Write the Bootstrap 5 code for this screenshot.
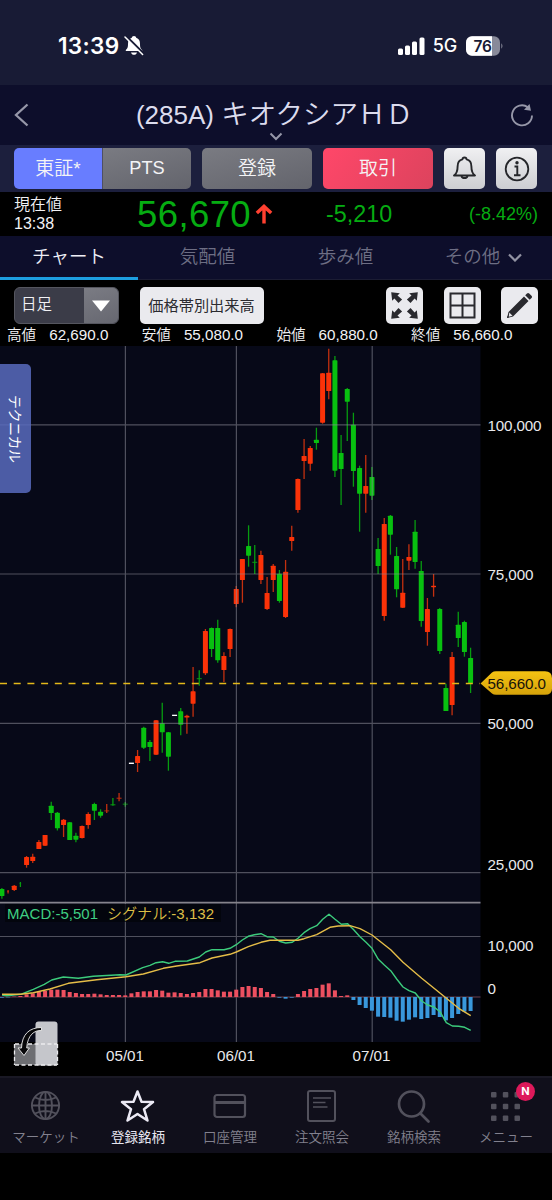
<!DOCTYPE html>
<html lang="ja">
<head>
<meta charset="utf-8">
<meta name="viewport" content="width=device-width, initial-scale=1">
<title>キオクシアHD チャート</title>
<link href="https://cdn.jsdelivr.net/npm/bootstrap@5.3.0/dist/css/bootstrap.min.css" rel="stylesheet">
<style>
body{background:#000;color:#f2f2f5;width:552px;height:1200px;overflow:hidden;font-family:"Liberation Sans","Noto Sans CJK JP",sans-serif;line-height:1.2}
svg{display:block;flex:none}
.btn{--bs-btn-padding-x:0;--bs-btn-padding-y:0;--bs-btn-border-width:0;--bs-btn-border-radius:5px;--bs-btn-font-size:19px;--bs-btn-color:#f4f4f6;--bs-btn-line-height:1;font-weight:350;height:41px;display:flex;align-items:center;justify-content:center;flex:none}
.status{height:85px;background:#181b35;padding:6px 49px 0 58px;font-family:Inter,sans-serif;color:#fff}
.clock{font-size:22.6px;font-weight:600;letter-spacing:.3px}
.net{font-size:18px;font-weight:500;letter-spacing:-.2px}
.titlebar{height:60px;background:#0d0e2b;padding:0 18px 0 14px}
.titlebar h1{font-size:26px;font-weight:350;color:#dcdcee;white-space:nowrap;line-height:30px;padding-left:9px}
.titlebar h1 span{font-size:27.5px}
.title-arrow{left:269px;top:47px}
.actions{height:47px;background:#1c1f3d;padding:3px 14px;}
.b-on{background:#687dff;width:88px}
.b-grey{background:linear-gradient(165deg,#7a7b82,#63646c)}
.b-red{background:linear-gradient(125deg,#ff4769,#dc435d);width:110px}
.b-light{background:linear-gradient(#f0f0f2,#cdced2);width:41px}
.quote{height:44px;background:#000;padding:0 14px}
.quote small{font-size:16px;line-height:19px;width:123px;font-weight:350}
.up{color:#06ac12}
.last{font-size:36.5px;line-height:46px;letter-spacing:.4px}
.tabs{height:44px;background:#0d0e2b;font-size:18.5px;font-weight:350}
.tabs .nav-link{width:138px;padding:0 0 0 1px;height:44px;color:#6d6e84;display:flex;align-items:center;justify-content:center;border-bottom:1px solid #1b1c33}
.tabs .nav-link.active{color:#eeeef6;border-bottom:3px solid #1d9ee0;padding:2px 0 0}
.tools{height:46px;padding:7px 14px 0}
.tools .btn{height:37px;color:#2b2b30;--bs-btn-font-size:15.2px;font-weight:400}
.period{width:105px;height:37px;border:1px solid #55565f;border-radius:6px;background:#3b3c48;font-size:15.500px;overflow:hidden;font-weight:350;padding-left:6px}
.period i{width:34px;height:37px;background:linear-gradient(160deg,#7b7c84,#666770)}
.tl{background:#eaeaee}
.ohlc{height:20px;font-size:14.6px;line-height:18px;font-weight:350;padding-left:7px}
.ohlc div{width:134.7px;white-space:nowrap}
.ohlc b{font-weight:400;font-size:15.2px;margin-left:13px}
.technical{left:0;top:18px;width:30.5px;height:129px;background:rgba(88,107,190,.85);border-radius:0 5px 5px 0;font-size:14px;letter-spacing:-.5px;writing-mode:vertical-rl;text-orientation:sideways;display:flex;align-items:center;justify-content:center;color:#fff;font-family:"Noto Sans CJK JP",sans-serif}
.bottom{height:77px;background:#100f1b;border-top:2px solid #191824}
.bottom a{width:92px;color:#82818e;text-decoration:none;font-size:13.5px;font-weight:350;padding-top:9px;line-height:18px}
.bottom a.active{color:#e5e4ef;font-weight:400}
.bottom svg{margin-bottom:4px;margin-left:-1px}
.n-badge{left:56px;top:4px;width:19px;height:19px;background:#dd195a;font:700 11px/19px Inter,sans-serif;padding:0}
</style>
</head>
<body>
<header>
<div class="status d-flex align-items-center justify-content-between">
 <div class="d-flex align-items-center"><span class="clock">13:39</span>
  <svg style="margin-left:5px" width="20" height="21" viewBox="0 0 20 21"><path d="M10 1c1.300 0 2 .8 2.200 1.800C15 3.700 16 6 16 9c0 4 .8 4.500 2.200 6v1H1.800v-1C3.200 13.500 4 13 4 9c0-3 1-5.300 3.800-6.200C8 1.800 8.700 1 10 1zM7 17.500h6c-.5 1.600-1.500 2.300-3 2.300s-2.500-.7-3-2.300z" fill="#fff"/><path d="M2.200 1.300l17.500 17.500" stroke="#181b35" stroke-width="2.600"/><path d="M1 2l17.600 17.500" stroke="#fff" stroke-width="1.500" stroke-linecap="round"/></svg></div>
 <div class="d-flex align-items-center">
  <svg width="28" height="20" viewBox="0 0 28 20" fill="#fff"><rect x="0" y="12.500" width="5" height="6.500" rx="1.500"/><rect x="7" y="9.500" width="5" height="9.500" rx="1.500"/><rect x="14" y="5.500" width="5" height="13.500" rx="1.500"/><rect x="21.500" y="1.500" width="5" height="17.500" rx="1.500"/></svg>
  <span class="net" style="margin:0 9px 0 7px">5G</span>
  <svg width="37" height="20" viewBox="0 0 37 20"><defs><clipPath id="cell"><rect width="34" height="19.500" y=".2" rx="6"/></clipPath></defs><g clip-path="url(#cell)"><rect width="34" height="20" fill="#888a99"/><rect width="26" height="20" fill="#fff"/></g><path d="M35.300 7.500c1.500.4 1.500 4.600 0 5z" fill="#888a99"/><text x="16.500" y="15.600" text-anchor="middle" font-size="15.500" font-weight="600" fill="#181b35" letter-spacing="-.4">76</text></svg>
 </div>
</div>
<div class="titlebar d-flex align-items-center justify-content-between position-relative">
 <svg width="16" height="24" viewBox="0 0 16 24" fill="none" stroke="#9697a8" stroke-width="2.300"><path d="M13.500 1.500L2 12l11.500 10.500"/></svg>
 <h1 class="m-0" id="stock">(285A) <span>キオクシアＨＤ</span></h1>
 <svg width="24" height="24" viewBox="0 0 24 24"><path d="M17.800 4.200A10 10 0 1 0 22 12.500" fill="none" stroke="#9697a8" stroke-width="1.900"/><path d="M19.500 1l1.500 6.700-7-1z" fill="#9697a8"/></svg>
 <svg class="title-arrow position-absolute" width="14" height="9" viewBox="0 0 14 9" fill="none" stroke="#9697a8" stroke-width="2"><path d="M1.500 1.500L7 7l5.500-5.500"/></svg>
</div>
<div class="actions d-flex">
 <button class="btn b-on rounded-end-0">東証*</button><button class="btn b-grey rounded-start-0" style="width:89px;border-left:1px solid #4f5062"><span style="font-size:18.2px">PTS</span></button>
 <button class="btn b-grey" style="width:110px;margin:0 11px">登録</button>
 <button class="btn b-red">取引</button>
 <button class="btn b-light" style="margin:0 11px"><svg width="25" height="27" viewBox="0 0 25 27" fill="none" stroke="#25262a" stroke-width="1.900" stroke-linejoin="round"><path d="M12.500 2.500c1.300 0 2 .8 2.100 1.900 3.500.8 4.800 3.500 4.800 7 0 5.500 1 7.200 3.600 9.100H2c2.600-1.900 3.600-3.600 3.600-9.100 0-3.500 1.300-6.200 4.800-7 .1-1.100.8-1.900 2.100-1.900z"/><path d="M9.500 21c.5 2.700 5.500 2.700 6 0"/></svg></button>
 <button class="btn b-light"><svg width="26" height="26" viewBox="0 0 26 26"><circle cx="13" cy="13" r="11.300" fill="none" stroke="#25262a" stroke-width="1.800"/><circle cx="13" cy="6.700" r="1.700" fill="#25262a"/><path d="M10.500 10.500h2.800v8.500M10 19.200h6.500" fill="none" stroke="#25262a" stroke-width="1.900"/></svg></button>
</div>
</header>
<section class="quote d-flex position-relative">
 <small class="d-block" style="padding-top:3px">現在値<br>13:38</small>
 <span class="last up">56,670</span>
 <svg style="margin:12px 0 0 4px" width="18" height="21" viewBox="0 0 18 22" fill="none" stroke="#ff4030" stroke-width="3.600"><path d="M9 20.500V3M1.500 9.500L9 2.500l7.500 7"/></svg>
 <span class="up d-flex align-items-center" style="font-size:23.3px;margin-left:53px;padding-top:2px">-5,210</span>
 <span class="up d-flex align-items-center ms-auto" style="font-size:18px;padding-top:2px">(-8.42%)</span>
</section>
<nav class="nav tabs flex-nowrap">
 <a class="nav-link active">チャート</a><a class="nav-link">気配値</a><a class="nav-link">歩み値</a>
 <a class="nav-link">その他<svg class="ms-2" width="14" height="9" viewBox="0 0 14 9" fill="none" stroke="#9293a3" stroke-width="2.200"><path d="M1 1.500l6 6 6-6"/></svg></a>
</nav>
<main>
<div class="tools d-flex">
 <div class="period d-flex align-items-center justify-content-between">日足<i class="d-flex align-items-center justify-content-center"><svg width="18" height="12" viewBox="0 0 18 12"><path d="M0 .5h18L9 11.500z" fill="#fff"/></svg></i></div>
 <button class="btn tl" style="width:124px;margin-left:21px">価格帯別出来高</button>
 <button class="btn tl" style="width:37px;margin-left:122px"><svg width="29" height="29" viewBox="0 0 29 29" fill="#29292e"><defs><path id="arr" d="M1.200 1.200l8.600 1L7.500 4.400l4.600 4.100-3.600 3.600-4.100-4.600-2.200 2.300z"/></defs><use href="#arr"/><use href="#arr" transform="rotate(90 14.500 14.500)"/><use href="#arr" transform="rotate(180 14.500 14.500)"/><use href="#arr" transform="rotate(270 14.500 14.500)"/></svg></button>
 <button class="btn tl" style="width:37px;margin-left:21px"><svg width="27" height="27" viewBox="0 0 27 27" fill="none" stroke="#29292e" stroke-width="2"><path d="M1.500 1.500h24v24h-24zM13.500 1.500v24M1.500 13.500h24"/></svg></button>
 <button class="btn tl" style="width:37px;margin-left:20.500px"><svg width="27" height="27" viewBox="0 0 27 27" fill="#29292e"><path d="M1 26l1.500-6L18 4.500 22.500 9 7 24.500zM19.200 3.300L21 1.500c.7-.7 1.500-.7 2.200 0l2.300 2.300c.7.700.7 1.500 0 2.200l-1.800 1.800z"/><path d="M3.300 20.500l3.200 3.200-3.700 1z" fill="#eaeaee"/><path d="M1 26l.5-2 1.500 1.500z"/></svg></button>
</div>
<div class="ohlc d-flex"><div>高値<b>62,690.0</b></div><div>安値<b>55,080.0</b></div><div>始値<b>60,880.0</b></div><div>終値<b>56,660.0</b></div></div>
<div class="position-relative">
<svg id="chart" width="552" height="730" viewBox="0 346 552 730" font-family="Liberation Sans, Noto Sans CJK JP, sans-serif">
 <defs><linearGradient id="gold" x2="0" y2="1"><stop stop-color="#f5c313"/><stop offset="1" stop-color="#d5a20a"/></linearGradient></defs>
 <rect x="0" y="346" width="480.500" height="696" fill="#070918"/>
 <g id="candles"></g>
 <g stroke="#8a8b98" stroke-opacity=".55" stroke-width="1.200"><path d="M0 424.800H480.500M0 574H480.500M0 723.400H480.500M0 872.600H480.500M0 936.500H480.500M125.400 346V1042M236.400 346V1042M372.200 346V1042"/></g>
 <path d="M0 902.700H480.500" stroke="#85838c" stroke-width="1.800"/>
 <path d="M0 683.500H480" stroke="#e3b91a" stroke-width="1.400" stroke-dasharray="7 6.700"/>
 <path d="M0 997H480.500" stroke="#6b414b" stroke-width="1"/>
 <g id="bars"></g>
 <rect x="5" y="904" width="216" height="18" fill="#03040a" opacity=".75"/>
 <g fill="none" stroke-width="1.400" stroke-linejoin="round"><polyline id="macd" stroke="#3ccb7c"/><polyline id="signal" stroke="#e5bd48"/></g>
 <g font-size="15"><text x="7" y="919" fill="#3fcf83" textLength="91">MACD:-5,501</text><text x="107" y="919" fill="#dcbf46" textLength="107" lengthAdjust="spacingAndGlyphs" font-weight="350">シグナル:-3,132</text></g>
 <g font-size="15.200" fill="#e9e9ec"><text x="487.500" y="431" textLength="54">100,000</text><text x="487.500" y="580" textLength="46">75,000</text><text x="487.500" y="729" textLength="46">50,000</text><text x="487.500" y="870" textLength="46">25,000</text><text x="487.500" y="951" textLength="46">10,000</text><text x="487.500" y="994">0</text>
 <text x="125" y="1061" text-anchor="middle">05/01</text><text x="236" y="1061" text-anchor="middle">06/01</text><text x="371.500" y="1061" text-anchor="middle">07/01</text></g>
 <path d="M480.500 683.500L492 672.500q1.500-1.300 4-1.300H545q7 0 7 7v10.500q0 6-7 6H496q-2.500 0-4-1.300z" fill="url(#gold)"/>
 <text x="487.500" y="689.300" font-size="15.200" fill="#15120a" textLength="58.500">56,660.0</text>
 <g><rect x="14" y="1044" width="43" height="21" rx="2" fill="#6d6e72"/><rect x="35.500" y="1021.500" width="22" height="44" rx="3" fill="#c5c6cb"/><path d="M15 1044H57M15 1065H57M14.500 1044V1065M57.500 1044V1065" stroke="#ebebee" stroke-width="1.300" stroke-dasharray="4 2.500"/><path d="M41.500 1030.500c-7-.5-14 4.500-14.800 17.500h2.700l-5.400 7.500-6-7.500h3.500c.5-14 8-20.500 20-20.500z" fill="#08080a" stroke="#eee" stroke-width=".9"/></g>
</svg>
<button class="technical position-absolute border-0 p-0">テクニカル</button>
</div>
</main>
<nav class="bottom d-flex text-center">
 <a class="d-flex flex-column align-items-center"><svg width="38" height="38" viewBox="0 0 38 38" fill="none" stroke="#52515c" stroke-width="1.900"><circle cx="18.500" cy="18.500" r="13.600"/><ellipse cx="18.500" cy="18.500" rx="6.500" ry="13.600"/><path d="M18.500 5v27M5 18.500h27M8 10.500q10.500 5 21 0M8 26.500q10.500-5 21 0"/></svg>マーケット</a>
 <a class="active d-flex flex-column align-items-center"><svg width="38" height="38" viewBox="0 0 38 38" fill="none" stroke="#eceaf5" stroke-width="2.500" stroke-linejoin="round"><path d="M18.500 4.500l4 10.200 11.500.4-9 7.100 3.500 11.300-10-6.500-10 6.500L12 22.200 3 15.100l11.500-.4z"/></svg>登録銘柄</a>
 <a class="d-flex flex-column align-items-center"><svg width="38" height="38" viewBox="0 0 38 38"><rect x="3.500" y="8" width="30.500" height="22" rx="2.500" fill="none" stroke="#52515c" stroke-width="2.200"/><path d="M3.500 15.500h30.500" stroke="#52515c" stroke-width="3"/></svg>口座管理</a>
 <a class="d-flex flex-column align-items-center"><svg width="38" height="38" viewBox="0 0 38 38" fill="none" stroke="#52515c" stroke-width="2"><rect x="5" y="4" width="27" height="30" rx="2"/><path d="M10 11h18M10 15.500h12.500M10 20h14.500" stroke-width="1.700"/></svg>注文照会</a>
 <a class="d-flex flex-column align-items-center"><svg width="38" height="38" viewBox="0 0 38 38" fill="none" stroke="#52515c" stroke-width="2.700" stroke-linecap="round"><circle cx="16.500" cy="17" r="12.500"/><path d="M25.500 26.500l8 8"/></svg>銘柄検索</a>
 <a class="d-flex flex-column align-items-center position-relative"><svg width="38" height="38" viewBox="0 0 38 38" fill="#52515c"><g id="dots"><rect x="4" y="5" width="5.500" height="5.500" rx="1"/><rect x="15.800" y="5" width="5.500" height="5.500" rx="1"/><rect x="27.500" y="5" width="5.500" height="5.500" rx="1"/></g><use href="#dots" y="11.800"/><use href="#dots" y="23.600"/></svg>メニュー<span class="n-badge badge rounded-circle position-absolute">N</span></a>
</nav>
<script src="https://cdn.jsdelivr.net/npm/bootstrap@5.3.0/dist/js/bootstrap.bundle.min.js"></script>
<script>
const X = i => 1.9 + i * 6.167;
// colour, high, body top, body bottom, low
const candles = `g 888 889 896 898.7|r 890 891 892 893.5|r 885 885.7 890 891|g 882 883 884 887|r 856 857 865 867.7|r 853.7 856.7 861 863|r 840 842 849 849|r 835 835 845.7 846|g 801.7 805.7 813 820|g 812 812.7 828.3 830.5|r 819 819.7 825 837|g 822 822.3 840 840|g 832.7 835.7 839.7 842.3|r 825.5 826 838 838.5|r 812.3 814 825 828.7|g 802.7 804 810.7 820|g 809.3 811.7 815.7 817.7|r 804 810.5 811.3 813|g 798 804.3 805.3 805.7|r 793 797.7 798.7 801.3|g 802 803.7 804.6 806.7|w 763 762.6 764 764|r 750 756 763 772|g 726.7 727.7 747.7 749|g 740 742 747 761|r 720 720.3 754.7 755|g 702.7 723.3 732.3 752.7|g 732 732.3 756.7 770.7|w 715 714.7 716 716|g 708 711.3 724.7 735.3|r 714.7 715.7 717.5 733.7|r 667 691.3 703.7 716.7|g 670.3 678.2 679.2 685.7|r 629 631 673.3 675|g 627.5 628 649 657|g 619.7 628 660.3 662.7|r 652.3 656 670 682|r 628.5 629 649 657|r 586 589 604 607.3|r 559 559 580 602.7|g 525.3 546 555.7 566.7|g 545 561.8 562.8 574|r 550.7 555 580 584|r 577 593 609 610|r 564 565.7 580 592|g 570 573.7 601 602.7|r 560 571.7 617 618|r 525.7 537 541 550.7|r 478.5 479 510 512.7|r 439 456 461 479|r 446 448 463.7 470.7|g 427.7 439.7 443 449.7|r 373 373.3 422.7 423.7|r 348.7 372.7 391 399.3|g 356 360.3 470.7 477|g 435 453 469 505|g 388 389 401.7 441|g 412.7 424.7 471 486.7|g 465.7 468 493.7 531.7|r 455 486 493.7 512.7|g 467 477 495.7 500|g 538 549 566 574|r 518 524 616 620.7|g 515 515.7 534.7 554.7|g 547 556 589.3 597.3|r 559 592.7 607.7 608|r 544.3 557 560.7 570|g 520 531.7 562 568.7|g 561 571 621 626.7|r 598 609 632 645.7|r 574 585.7 587.2 596.7|g 608 609 651 654|g 683.7 688 711 711|r 652 657 705 715.3|g 611.7 624.7 638 647|g 620.7 622 652 656.7|g 647.7 658 683.7 693`.split('|');
const col = {g:['#08c010','#079c10'],r:['#fb3208','#c4300f'],w:['#fff','none']};
document.getElementById('candles').innerHTML = candles.map((c,i)=>{
  const [k,h,t,b,l] = c.split(' '), thin = b-t < 1.2, w = i===1||i===3 ? 1.4 : 5;
  return `<path d="M${X(i)} ${h}V${l}" stroke="${col[k][1]}" stroke-width="1.3"/><rect x="${X(i)-w/2}" y="${t}" width="${w}" height="${b-t}" rx="${thin||k==='w'?0:.6}" fill="${col[k][thin?1:0]}"/>`;
}).join('');
// histogram, in thirds of a pixel from the zero line, starting at the 1st session
const hist = [-2,-1,1,3,8,11,15,18,22,22,21,15,12,9,9,10,8,6,6,6,5,11,15,17,17,21,19,13,14,12,9,12,15,24,24,20,16,16,22,30,33,30,27,15,9,-2,-5,-2,9,18,24,27,37,41,20,3,5,-9,-24,-33,-41,-59,-60,-62,-71,-74,-68,-61,-66,-63,-54,-60,-70,-63,-51,-44,-42];
document.getElementById('bars').innerHTML = hist.map((v,i)=>`<rect x="${X(i)-2}" y="${v>0?997-v/3:997}" width="4" height="${Math.abs(v)/3}" fill="${v>0?'#ed5060':'#3998dc'}"/>`).join('');
const line = (id,a,b) => document.getElementById(id).setAttribute('points',
  [...a.map(([x,y])=>[x/3,895+y/3]),...b.map(([x,y])=>[270+x/3,895+y/3])].map(p=>p.map(n=>n.toFixed(1)).join()).join(' '));
line('macd',[[6,300],[20,302],[62,298],[100,283],[133,268],[155,255],[190,246],[235,250],[280,244],[360,239],[378,240],[428,218],[450,211],[468,203],[488,200],[506,205],[525,199],[562,198],[598,186],[617,171],[636,164],[672,164],[690,160],[709,149],[727,135],[745,124],[763,119],[783,116],[801,125]],
[[10,126],[28,139],[47,144],[67,142],[84,130],[102,113],[120,101],[140,92],[158,73],[177,58],[195,73],[214,88],[233,86],[251,104],[270,125],[288,142],[306,160],[325,193],[343,210],[362,227],[380,252],[399,276],[417,287],[436,294],[455,318],[473,330],[492,336],[510,350],[529,383],[547,393],[566,394],[584,397],[602,406]]);
line('signal',[[6,298],[62,298],[100,293],[150,282],[205,265],[290,254],[378,245],[430,237],[490,220],[530,213],[600,203],[636,189],[690,178],[709,171],[745,155],[783,142],[800,138]],
[[0,136],[84,136],[102,131],[140,119],[180,97],[205,93],[240,92],[270,101],[306,120],[362,164],[399,202],[455,250],[520,302],[566,340],[602,362]]);
</script>
</body>
</html>
